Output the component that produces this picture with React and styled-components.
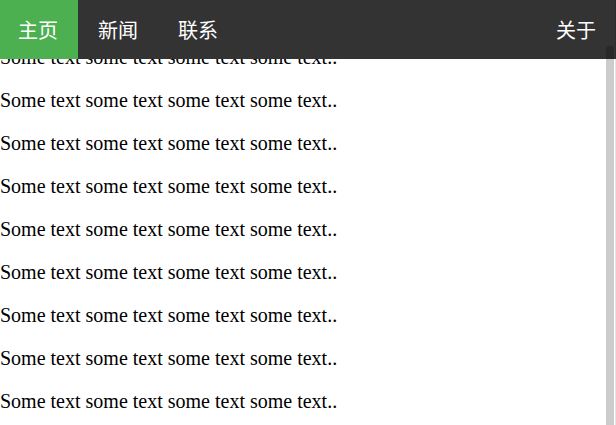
import React, { useEffect } from "react";
import styled, { createGlobalStyle } from "styled-components";

const GlobalStyle = createGlobalStyle`
  html,
  body {
    margin: 0;
    padding: 0;
    background: #fff;
  }

  body {
    font-family: "Liberation Serif", "Times New Roman", serif;
    font-size: 20px;
    color: #000;
  }
`;

const TopNav = styled.ul`
  position: fixed;
  top: 0;
  left: 0;
  z-index: 1;
  display: flex;
  gap: 2px;
  width: 100vw;
  height: 59px;
  margin: 0;
  padding: 0;
  list-style: none;
  background-color: #333;
  font-family: "Noto Sans CJK SC", "Noto Sans", sans-serif;
  font-size: 20px;
`;

const NavItem = styled.li`
  display: flex;
  margin-left: ${(p) => (p.$right ? "auto" : "0")};
`;

const NavLink = styled.a`
  display: flex;
  align-items: center;
  padding: 0 20px 0 18px;
  color: #fff;
  text-decoration: none;
  background-color: ${(p) => (p.$active ? "#4caf50" : "transparent")};
`;

// thin overlay scrollbar, sits on top of the bar too
const ScrollTrack = styled.div`
  position: fixed;
  top: 0;
  right: 0;
  bottom: 0;
  z-index: 2;
  width: 10px;
  box-shadow: inset -1px 0 0 rgba(0, 0, 0, 0.1);
  pointer-events: none;
`;

const ScrollThumb = styled.div`
  position: absolute;
  top: 46px;
  bottom: 0;
  left: 0;
  width: 8px;
  border-radius: 3px 3px 0 0;
  background: rgba(0, 0, 0, 0.2);
`;

const Content = styled.div`
  height: 477px;
  padding-top: 35px;
  box-sizing: border-box;
  overflow: hidden;
`;

const Para = styled.p`
  margin: 20px 0;
  line-height: 23px;
`;

const links = [
  { label: "主页", active: true },
  { label: "新闻" },
  { label: "联系" },
  { label: "关于", right: true },
];

const App = () => {
  useEffect(() => {
    window.scrollTo(0, 52);
  }, []);

  return (
    <>
      <GlobalStyle />
      <TopNav>
        {links.map((l) => (
          <NavItem key={l.label} $right={l.right}>
            <NavLink href="#" $active={l.active}>
              {l.label}
            </NavLink>
          </NavItem>
        ))}
      </TopNav>
      <ScrollTrack>
        <ScrollThumb />
      </ScrollTrack>
      <Content>
        {Array.from({ length: 10 }).map((_, i) => (
          <Para key={i}>Some text some text some text some text..</Para>
        ))}
      </Content>
    </>
  );
};

export default App;
